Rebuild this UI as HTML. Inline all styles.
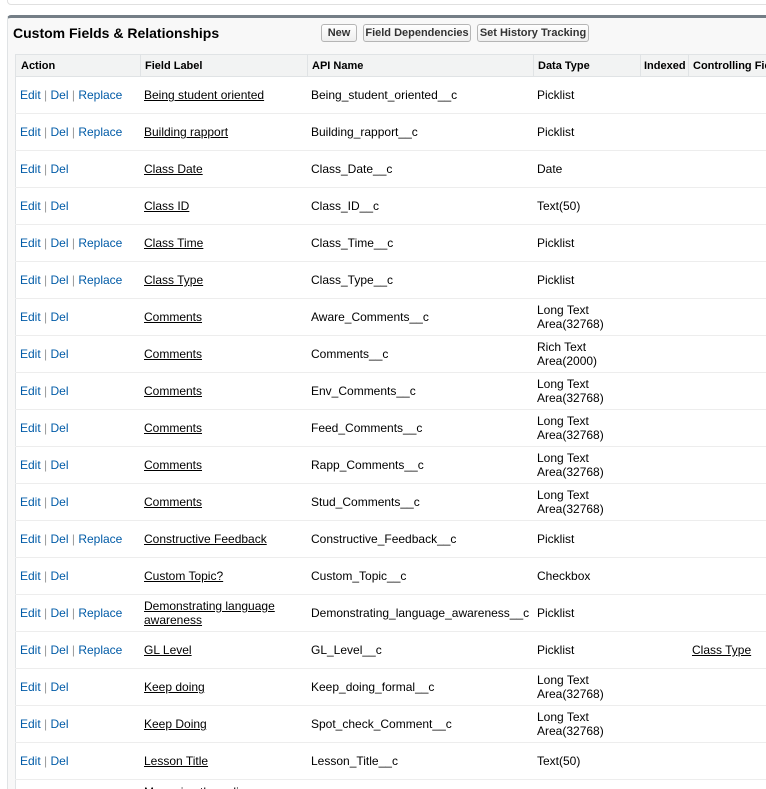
<!DOCTYPE html>
<html><head><meta charset="utf-8"><style>
*{margin:0;padding:0;box-sizing:border-box}
html{width:766px;height:789px;overflow:hidden}
body{width:766px;height:789px;overflow:hidden;background:#fff;font-family:"Liberation Sans",Arial,sans-serif;font-size:12px;color:#000;position:relative}
.topbox{position:absolute;left:7px;top:-5px;width:770px;height:10px;border:1px solid #e0e0e0;border-radius:4px;background:#fff}
.panel{position:absolute;left:7px;top:15px;width:780px;height:800px;background:#f8f8f8;border-top:3px solid #747e86;border-left:1px solid #e0e3e5;border-radius:4px 0 0 0}
h2{position:absolute;left:13px;top:25px;font-size:14px;font-weight:bold;color:#000}
.btn{position:absolute;top:24px;height:18px;border:1px solid #b5b5b5;border-radius:3px;background:linear-gradient(#fff,#eee);font-size:11px;font-weight:bold;color:#333;line-height:16px;text-align:center;white-space:nowrap}
.tbl{position:absolute;left:15px;top:54px;width:760px;height:740px;background:#fff;border-left:1px solid #e0e3e5;border-top:1px solid #e0e3e5}
.hdr{position:absolute;left:0;top:0;width:760px;height:22px;background:#f2f3f3;border-bottom:1px solid #e0e3e5;font-size:11px;font-weight:bold}
.hdr span{position:absolute;top:5px;height:16px;white-space:nowrap}
.sep{position:absolute;top:0;width:1px;height:21px;background:#e0e3e5}
.row{position:absolute;left:0;width:760px;height:37px;border-bottom:1px solid #ededed}
.row div{position:absolute;top:0;height:36px;display:flex;align-items:center;line-height:14px}
a{color:#015ba7;text-decoration:none}
u{color:#000}
.c1{left:5px}.c2{left:129px;width:150px}.c3{left:296px}.c4{left:522px;width:100px}.c6{left:677px}
.bar{color:#999}
</style></head><body>
<div class="topbox"></div>
<div class="panel"></div>
<h2>Custom Fields &amp; Relationships</h2>
<div class="btn" style="left:321px;width:36px">New</div>
<div class="btn" style="left:363px;width:108px">Field Dependencies</div>
<div class="btn" style="left:477px;width:112px">Set History Tracking</div>
<div class="tbl">
<div class="hdr">
<span style="left:5px">Action</span><div class="sep" style="left:124px"></div>
<span style="left:129px">Field Label</span><div class="sep" style="left:291px"></div>
<span style="left:296px">API Name</span><div class="sep" style="left:517px"></div>
<span style="left:522px">Data Type</span><div class="sep" style="left:624px"></div>
<span style="left:628px">Indexed</span><div class="sep" style="left:672px"></div>
<span style="left:677px">Controlling Field</span>
</div>
</div>
<div style="position:absolute;left:15px;top:77px;width:760px">
<div class="row" style="top:0"><div class="c1"><a>Edit</a>&nbsp;<span class="bar">|</span>&nbsp;<a>Del</a>&nbsp;<span class="bar">|</span>&nbsp;<a>Replace</a></div><div class="c2"><u>Being student oriented</u></div><div class="c3">Being_student_oriented__c</div><div class="c4">Picklist</div></div>
<div class="row" style="top:37px"><div class="c1"><a>Edit</a>&nbsp;<span class="bar">|</span>&nbsp;<a>Del</a>&nbsp;<span class="bar">|</span>&nbsp;<a>Replace</a></div><div class="c2"><u>Building rapport</u></div><div class="c3">Building_rapport__c</div><div class="c4">Picklist</div></div>
<div class="row" style="top:74px"><div class="c1"><a>Edit</a>&nbsp;<span class="bar">|</span>&nbsp;<a>Del</a></div><div class="c2"><u>Class Date</u></div><div class="c3">Class_Date__c</div><div class="c4">Date</div></div>
<div class="row" style="top:111px"><div class="c1"><a>Edit</a>&nbsp;<span class="bar">|</span>&nbsp;<a>Del</a></div><div class="c2"><u>Class ID</u></div><div class="c3">Class_ID__c</div><div class="c4">Text(50)</div></div>
<div class="row" style="top:148px"><div class="c1"><a>Edit</a>&nbsp;<span class="bar">|</span>&nbsp;<a>Del</a>&nbsp;<span class="bar">|</span>&nbsp;<a>Replace</a></div><div class="c2"><u>Class Time</u></div><div class="c3">Class_Time__c</div><div class="c4">Picklist</div></div>
<div class="row" style="top:185px"><div class="c1"><a>Edit</a>&nbsp;<span class="bar">|</span>&nbsp;<a>Del</a>&nbsp;<span class="bar">|</span>&nbsp;<a>Replace</a></div><div class="c2"><u>Class Type</u></div><div class="c3">Class_Type__c</div><div class="c4">Picklist</div></div>
<div class="row" style="top:222px"><div class="c1"><a>Edit</a>&nbsp;<span class="bar">|</span>&nbsp;<a>Del</a></div><div class="c2"><u>Comments</u></div><div class="c3">Aware_Comments__c</div><div class="c4">Long Text<br>Area(32768)</div></div>
<div class="row" style="top:259px"><div class="c1"><a>Edit</a>&nbsp;<span class="bar">|</span>&nbsp;<a>Del</a></div><div class="c2"><u>Comments</u></div><div class="c3">Comments__c</div><div class="c4">Rich Text<br>Area(2000)</div></div>
<div class="row" style="top:296px"><div class="c1"><a>Edit</a>&nbsp;<span class="bar">|</span>&nbsp;<a>Del</a></div><div class="c2"><u>Comments</u></div><div class="c3">Env_Comments__c</div><div class="c4">Long Text<br>Area(32768)</div></div>
<div class="row" style="top:333px"><div class="c1"><a>Edit</a>&nbsp;<span class="bar">|</span>&nbsp;<a>Del</a></div><div class="c2"><u>Comments</u></div><div class="c3">Feed_Comments__c</div><div class="c4">Long Text<br>Area(32768)</div></div>
<div class="row" style="top:370px"><div class="c1"><a>Edit</a>&nbsp;<span class="bar">|</span>&nbsp;<a>Del</a></div><div class="c2"><u>Comments</u></div><div class="c3">Rapp_Comments__c</div><div class="c4">Long Text<br>Area(32768)</div></div>
<div class="row" style="top:407px"><div class="c1"><a>Edit</a>&nbsp;<span class="bar">|</span>&nbsp;<a>Del</a></div><div class="c2"><u>Comments</u></div><div class="c3">Stud_Comments__c</div><div class="c4">Long Text<br>Area(32768)</div></div>
<div class="row" style="top:444px"><div class="c1"><a>Edit</a>&nbsp;<span class="bar">|</span>&nbsp;<a>Del</a>&nbsp;<span class="bar">|</span>&nbsp;<a>Replace</a></div><div class="c2"><u>Constructive Feedback</u></div><div class="c3">Constructive_Feedback__c</div><div class="c4">Picklist</div></div>
<div class="row" style="top:481px"><div class="c1"><a>Edit</a>&nbsp;<span class="bar">|</span>&nbsp;<a>Del</a></div><div class="c2"><u>Custom Topic?</u></div><div class="c3">Custom_Topic__c</div><div class="c4">Checkbox</div></div>
<div class="row" style="top:518px"><div class="c1"><a>Edit</a>&nbsp;<span class="bar">|</span>&nbsp;<a>Del</a>&nbsp;<span class="bar">|</span>&nbsp;<a>Replace</a></div><div class="c2"><u>Demonstrating language awareness</u></div><div class="c3">Demonstrating_language_awareness__c</div><div class="c4">Picklist</div></div>
<div class="row" style="top:555px"><div class="c1"><a>Edit</a>&nbsp;<span class="bar">|</span>&nbsp;<a>Del</a>&nbsp;<span class="bar">|</span>&nbsp;<a>Replace</a></div><div class="c2"><u>GL Level</u></div><div class="c3">GL_Level__c</div><div class="c4">Picklist</div><div class="c6"><u>Class Type</u></div></div>
<div class="row" style="top:592px"><div class="c1"><a>Edit</a>&nbsp;<span class="bar">|</span>&nbsp;<a>Del</a></div><div class="c2"><u>Keep doing</u></div><div class="c3">Keep_doing_formal__c</div><div class="c4">Long Text<br>Area(32768)</div></div>
<div class="row" style="top:629px"><div class="c1"><a>Edit</a>&nbsp;<span class="bar">|</span>&nbsp;<a>Del</a></div><div class="c2"><u>Keep Doing</u></div><div class="c3">Spot_check_Comment__c</div><div class="c4">Long Text<br>Area(32768)</div></div>
<div class="row" style="top:666px"><div class="c1"><a>Edit</a>&nbsp;<span class="bar">|</span>&nbsp;<a>Del</a></div><div class="c2"><u>Lesson Title</u></div><div class="c3">Lesson_Title__c</div><div class="c4">Text(50)</div></div>
<div class="row" style="top:703px"><div class="c2" style="align-items:flex-start;padding-top:5px"><u>Managing the online</u></div></div>
</div>
</body></html>
